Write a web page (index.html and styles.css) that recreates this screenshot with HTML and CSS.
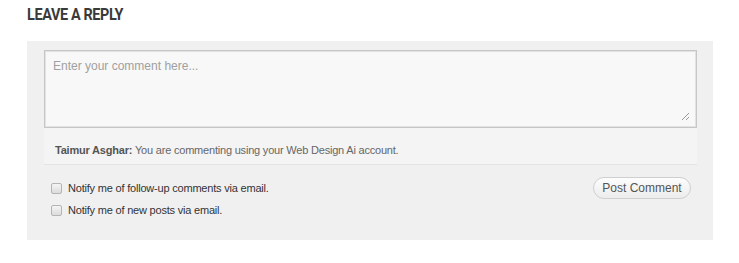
FILE: index.html
```html
<!DOCTYPE html>
<html lang="en">
<head>
    <meta charset="UTF-8">
    <title>Leave a Reply</title>
    <link rel="stylesheet" href="styles.css">
</head>
<body>
    <h3 class="reply-title"><span>Leave a Reply</span></h3>
    <form class="comment-form">
        <textarea class="comment-box" placeholder="Enter your comment here..."></textarea>
        <div class="identity">
            <strong>Taimur Asghar:</strong> You are commenting using your Web Design Ai account.
        </div>
        <div class="form-bottom">
            <div class="subscriptions">
                <label class="notify"><input type="checkbox"> Notify me of follow-up comments via email.</label>
                <label class="notify"><input type="checkbox"> Notify me of new posts via email.</label>
            </div>
            <button type="button" class="post-button">Post Comment</button>
        </div>
    </form>
</body>
</html>
```

FILE: styles.css
```css
body {
    margin: 0;
    background-color: #fff;
    font-family: "Liberation Sans", Arial, sans-serif;
}
.reply-title {
    margin: 0;
    padding: 5px 0 0 27px;
    height: 36px;
    box-sizing: border-box;
    font-family: "Roboto", sans-serif;
    font-size: 16px;
    font-weight: bold;
    letter-spacing: -0.4px;
    text-transform: uppercase;
    color: #3a3a3a;
}
.reply-title span {
    display: inline-block;
    transform: scaleX(0.9);
    transform-origin: left center;
}
.comment-form {
    margin: 5px 0 0 27px;
    width: 686px;
    height: 199px;
    box-sizing: border-box;
    padding: 9px 16px 0 17px;
    background-color: #f0f0f0;
}
.comment-box {
    display: block;
    width: 100%;
    height: 78px;
    box-sizing: border-box;
    margin: 0;
    padding: 8px 8px;
    border: 1px solid #c6c6c6;
    box-shadow: inset 0 0 0 1px #e2e2e2;
    background-color: #f8f8f8;
    /* resize grip drawn by hand */
    background-image: linear-gradient(135deg, transparent 45%, #999 45%, #999 56%, transparent 56%, transparent 72%, #999 72%, #999 83%, transparent 83%);
    background-repeat: no-repeat;
    background-size: 7px 7px;
    background-position: right 7px bottom 7px;
    font-family: "Liberation Sans", Arial, sans-serif;
    font-size: 12px;
    resize: none;
}
.comment-box::placeholder {
    color: #a0a0a0;
}
.identity {
    height: 37px;
    box-sizing: border-box;
    padding: 16px 0 0 11px;
    background-color: #f4f4f4;
    border-bottom: 1px solid #e4e4e4;
    font-size: 11px;
    letter-spacing: -0.2px;
    color: #666;
}
.identity strong {
    color: #555;
}
.form-bottom {
    display: flex;
    justify-content: space-between;
    align-items: flex-start;
    padding: 12px 6px 0 7px;
}
.subscriptions {
    display: flex;
    flex-direction: column;
    gap: 6px;
    padding-top: 3px;
}
.notify {
    display: flex;
    align-items: center;
    font-size: 11px;
    letter-spacing: -0.2px;
    color: #333;
    height: 16px;
}
.notify input {
    appearance: none;
    width: 11px;
    height: 11px;
    margin: 0 6px 0 0;
    border: 1px solid #b4b4b4;
    border-radius: 2px;
    background: linear-gradient(#f4f4f4, #dcdcdc);
}
.post-button {
    height: 22px;
    width: 98px;
    padding: 0;
    border: 1px solid #cfcfcf;
    border-radius: 11px;
    background: linear-gradient(#fdfdfd, #ececec);
    font-family: "Liberation Sans", Arial, sans-serif;
    font-size: 12px;
    color: #555;
}
```
